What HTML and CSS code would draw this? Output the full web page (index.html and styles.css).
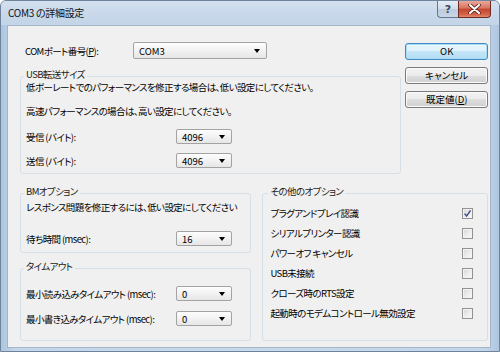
FILE: index.html
```html
<!DOCTYPE html>
<html lang="ja">
<head>
<meta charset="utf-8">
<title>COM3 の詳細設定</title>
<link rel="stylesheet" href="styles.css">
</head>
<body>
<div class="window">
  <div class="titlebar">
    <span class="title">COM3 の詳細設定</span>
    <div class="caption">
      <span class="cap-btn help">?</span>
      <span class="cap-btn close">
        <svg width="13" height="10" viewBox="0 0 13 10"><path d="M2 1 L11 9 M11 1 L2 9" stroke="#5a1f18" stroke-width="3.6" stroke-linecap="round"/><path d="M2 1 L11 9 M11 1 L2 9" stroke="#ffffff" stroke-width="2" stroke-linecap="round"/></svg>
      </span>
    </div>
  </div>
  <div class="client">
    <div class="top">
      <div class="top-main">
        <div class="com-row">
          <span class="com-label">COMポート番号(<u>P</u>):</span>
          <div class="combo combo-wide"><span>COM3</span><i class="arrow"></i></div>
        </div>
        <fieldset class="group usb">
          <legend>USB転送サイズ</legend>
          <p class="note">低ボーレートでのパフォーマンスを修正する場合は、低い設定にしてください。</p>
          <p class="note">高速パフォーマンスの場合は、高い設定にしてください。</p>
          <div class="field-row"><span class="label">受信 (バイト):</span><div class="combo"><span>4096</span><i class="arrow"></i></div></div>
          <div class="field-row"><span class="label">送信 (バイト):</span><div class="combo"><span>4096</span><i class="arrow"></i></div></div>
        </fieldset>
      </div>
      <div class="buttons">
        <button class="btn btn-default">OK</button>
        <button class="btn">キャンセル</button>
        <button class="btn">既定値(<u>D</u>)</button>
      </div>
    </div>
    <div class="bottom">
      <div class="left-col">
        <fieldset class="group bm">
          <legend>BMオプション</legend>
          <p class="note">レスポンス問題を修正するには、低い設定にしてください</p>
          <div class="field-row"><span class="label">待ち時間 (msec):</span><div class="combo"><span>16</span><i class="arrow"></i></div></div>
        </fieldset>
        <fieldset class="group timeout">
          <legend>タイムアウト</legend>
          <div class="field-row"><span class="label">最小読み込みタイムアウト (msec):</span><div class="combo"><span>0</span><i class="arrow"></i></div></div>
          <div class="field-row"><span class="label">最小書き込みタイムアウト (msec):</span><div class="combo"><span>0</span><i class="arrow"></i></div></div>
        </fieldset>
      </div>
      <fieldset class="group other">
        <legend>その他のオプション</legend>
        <div class="check-row"><span>プラグアンドプレイ認識</span><span class="checkbox"><svg width="9" height="9" viewBox="0 0 9 9"><path d="M1.6 4.6 L3.6 7 L7.6 1.4" fill="none" stroke="#3b4f8c" stroke-width="1.4"/></svg></span></div>
        <div class="check-row"><span>シリアルプリンター認識</span><span class="checkbox"></span></div>
        <div class="check-row"><span>パワーオフ キャンセル</span><span class="checkbox"></span></div>
        <div class="check-row"><span>USB未接続</span><span class="checkbox"></span></div>
        <div class="check-row"><span>クローズ時のRTS設定</span><span class="checkbox"></span></div>
        <div class="check-row"><span>起動時のモデムコントロール無効設定</span><span class="checkbox"></span></div>
      </fieldset>
    </div>
  </div>
</div>
</body>
</html>
```
FILE: styles.css
```css
* { box-sizing: border-box; }

body {
  margin: 0;
  background: #ffffff;
  font-family: "Noto Sans CJK JP", "Noto Sans", sans-serif;
  font-size: 9.5px;
  letter-spacing: -0.6px;
  font-feature-settings: "palt";
  color: #000000;
}

.window {
  width: 500px;
  height: 352px;
  display: flex;
  flex-direction: column;
  border: 1px solid #6f839c;
  border-radius: 6px 6px 0 0;
  padding-bottom: 3px;
  background: linear-gradient(90deg, #aec6e0 0%, #c4d6ea 3%, #c9d9ec 50%, #c4d6ea 97%, #aec6e0 100%);
}

.titlebar {
  height: 24px;
  flex: none;
  display: flex;
  justify-content: space-between;
  align-items: flex-start;
  padding-left: 7px;
  padding-right: 8px;
  background: linear-gradient(#d3e0ef, #c8d8ea 60%, #c3d4e8);
  border-radius: 5px 5px 0 0;
}

.title {
  line-height: 24px;
  font-size: 10px;
  letter-spacing: -0.3px;
  color: #111;
}

.caption {
  display: flex;
}

.cap-btn {
  height: 17px;
  display: flex;
  align-items: center;
  justify-content: center;
  border: 1px solid #63768f;
  border-top: none;
}

.help {
  width: 21px;
  border-right: none;
  border-radius: 0 0 0 4px;
  background: linear-gradient(#e4ecf5, #d1dce9 50%, #bccbdd 50%, #c8d6e6);
  color: #3a4a60;
  font-size: 11px;
  letter-spacing: 0;
  font-weight: bold;
  font-family: "DejaVu Sans", sans-serif;
}

.close {
  width: 33px;
  border-color: #6e2b24;
  border-radius: 0 0 4px 0;
  background: linear-gradient(#e9a99b, #d7735f 45%, #c4452f 50%, #d2654a 85%, #e38d6f);
}

.client {
  flex: 1;
  margin: 0 8px 0 6px;
  background: #f0f0f0;
  border: 1px solid #a5b5c9;
  padding: 16px 2px 0 12px;
}

.top {
  display: flex;
  gap: 4px;
}

.top-main {
  width: 383px;
}

.com-row {
  display: flex;
  align-items: center;
  height: 17px;
  padding-left: 5px;
}

.com-label {
  width: 108px;
}

.combo {
  width: 56px;
  height: 15px;
  flex: none;
  display: flex;
  align-items: center;
  justify-content: space-between;
  padding: 0 6px 0 5px;
  border: 1px solid #a3a3a3;
  border-radius: 2px;
  background: linear-gradient(#fdfdfd, #f2f2f2 50%, #e6e6e6);
  line-height: 12px;
  letter-spacing: 0;
}

.combo-wide {
  width: 134px;
  height: 17px;
}

.arrow {
  width: 0;
  height: 0;
  border-left: 3.5px solid transparent;
  border-right: 3.5px solid transparent;
  border-top: 4px solid #000;
}

.group {
  margin: 0;
  min-width: 0;
  border: 1px solid #d5dfe5;
  border-radius: 3px;
  padding: 0 5px 5px 5px;
}

.group legend {
  padding: 0 2px 4px;
  margin-left: -2px;
  height: 12px;
  line-height: 8px;
  color: #1a1a1a;
}

.note {
  margin: 0;
  line-height: 12px;
  white-space: nowrap;
}

.note + .note {
  margin-top: 12px;
}

.field-row {
  display: flex;
  align-items: center;
  height: 15px;
}

.label {
  width: 150px;
  flex: none;
  white-space: nowrap;
}

.usb {
  margin-top: 11px;
}

.usb .note:first-of-type {
  margin-top: -1px;
}

.usb .field-row {
  margin-top: 12px;
}

.usb .field-row + .field-row {
  margin-top: 9px;
}

.buttons {
  width: 83px;
  display: flex;
  flex-direction: column;
  gap: 7px;
  padding-top: 1px;
}

.btn {
  height: 17px;
  padding: 0;
  font: inherit;
  color: #000;
  border: 1px solid #7a7a7a;
  border-radius: 3px;
  background: linear-gradient(#f3f3f3, #ebebeb 50%, #dddddd 50%, #d0d0d0);
  box-shadow: inset 0 0 0 1px #fbfbfb;
  line-height: 13px;
}

.btn-default {
  border-color: #3f8cc4;
  background: linear-gradient(#ecf6fc, #dcf0fb 50%, #c4e6f8 50%, #b3ddf4);
  box-shadow: inset 0 0 0 1px #a8dcf6;
}

.bottom {
  display: flex;
  gap: 11px;
  margin-top: 13px;
}

.left-col {
  width: 232px;
  display: flex;
  flex-direction: column;
}

.bm {
  padding-top: 2px;
  padding-bottom: 6px;
}

.bm .field-row {
  margin-top: 18px;
}

.timeout {
  margin-top: 9px;
  padding-top: 12px;
  padding-bottom: 14px;
}

.timeout .field-row + .field-row {
  margin-top: 10px;
}

.other {
  width: 226px;
  padding: 7px 14px 0 7px;
}

.check-row {
  display: flex;
  justify-content: space-between;
  align-items: center;
  height: 14px;
  white-space: nowrap;
}

.check-row + .check-row {
  margin-top: 6px;
}

.checkbox {
  width: 11px;
  height: 11px;
  display: flex;
  align-items: center;
  justify-content: center;
  border: 1px solid #939393;
  background: linear-gradient(135deg, #d6d6d6, #eeeeee 60%, #fafafa);
  box-shadow: inset 0 0 0 1px #f2f2f2;
}
```
